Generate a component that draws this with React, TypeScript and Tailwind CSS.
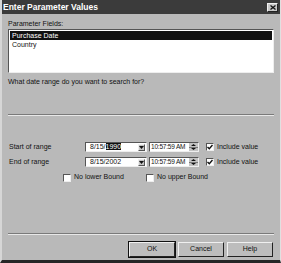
import React from "react";

const font = { fontFamily: '"Liberation Sans", Arial, sans-serif' };

function Check({ checked }: { checked?: boolean }) {
  return (
    <span className="flex h-[8px] w-[8px] shrink-0 items-center justify-center border border-t-[#555] border-l-[#555] border-b-[#eee] border-r-[#eee] bg-white">
      {checked ? (
        <svg width="6" height="6" viewBox="0 0 6 6">
          <path d="M0.5 3 L2.3 4.8 L5.5 1" stroke="#111" strokeWidth="1.4" fill="none" />
        </svg>
      ) : null}
    </span>
  );
}

function RangeRow({ label, date, sel }: { label: string; date: string; sel?: boolean }) {
  return (
    <div className="flex h-[10px] items-center whitespace-nowrap">
      <span className="w-[77px] pl-[1px] text-[7px] text-[#111]">{label}</span>
      <div className="flex h-[10px] w-[62px] items-center border border-t-[#555] border-l-[#555] border-b-[#eee] border-r-[#eee] bg-white">
        <span className="ml-[4px] flex-1 text-[7px] leading-[8px] text-[#111]">
          {sel ? (
            <>
              8/15/<span className="bg-[#111] text-white">1990</span>
            </>
          ) : (
            date
          )}
        </span>
        <span className="mr-[1px] flex h-[7px] w-[7px] items-center justify-center bg-[#c4c4c4] border border-t-[#eee] border-l-[#eee] border-b-[#555] border-r-[#555]">
          <svg width="5" height="3" viewBox="0 0 5 3">
            <path d="M0 0 H5 L2.5 3 Z" fill="#111" />
          </svg>
        </span>
      </div>
      <div className="ml-[2px] flex h-[10px] w-[50px] items-center border border-t-[#555] border-l-[#555] border-b-[#eee] border-r-[#eee] bg-white">
        <span className="ml-[1px] flex-1 overflow-hidden text-[6.5px] leading-[8px] tracking-[-0.2px] text-[#111]">10:57:59 AM</span>
        <span className="flex h-[8px] w-[9px] shrink-0 flex-col bg-[#c4c4c4]">
          <span className="flex flex-1 items-center justify-center border-b border-[#777]">
            <svg width="5" height="2" viewBox="0 0 5 2">
              <path d="M0 2 H5 L2.5 0 Z" fill="#111" />
            </svg>
          </span>
          <span className="flex flex-1 items-center justify-center">
            <svg width="5" height="2" viewBox="0 0 5 2">
              <path d="M0 0 H5 L2.5 2 Z" fill="#111" />
            </svg>
          </span>
        </span>
      </div>
      <span className="ml-[7px]">
        <Check checked />
      </span>
      <span className="ml-[3px] text-[7px] text-[#111]">Include value</span>
    </div>
  );
}

function Btn({ children, def }: { children: React.ReactNode; def?: boolean }) {
  return (
    <button
      className={
        "flex h-[15px] w-[46px] items-center justify-center bg-[#bdbdbd] text-[7px] text-[#111] border border-t-[#f0f0f0] border-l-[#f0f0f0] border-b-[#222] border-r-[#222] " +
        (def ? "outline outline-1 outline-[#111]" : "")
      }
    >
      {children}
    </button>
  );
}

export default function App() {
  return (
    <div
      style={font}
      className="flex h-[263px] w-[281px] flex-col overflow-hidden border-l-2 border-r border-b-[3px] border-l-[#d6d6d6] border-r-[#e0e0e0] border-b-[#262626] bg-[#b9b9b9]"
    >
      <div className="flex h-[14px] items-center justify-between bg-[#3b3b3b] pl-[1px] pr-[2px]">
        <span className="text-[8.5px] font-bold text-white">Enter Parameter Values</span>
        <span className="flex h-[9px] w-[11px] items-center justify-center bg-[#c8c8c8] border border-t-[#f0f0f0] border-l-[#f0f0f0] border-b-[#222] border-r-[#222]">
          <svg width="6" height="5" viewBox="0 0 6 5">
            <path d="M0.5 0.5 L5.5 4.5 M5.5 0.5 L0.5 4.5" stroke="#111" strokeWidth="1.3" />
          </svg>
        </span>
      </div>

      <div className="flex flex-1 flex-col px-[6px]">
        <div className="mt-[6px] text-[7px] leading-[8px] text-[#111]">Parameter Fields:</div>
        <div className="mt-[1px] h-[44px] border border-t-[#555] border-l-[#555] border-b-[#eee] border-r-[#eee] bg-white p-[1px] text-[7px] leading-[9px]">
          <div className="bg-[#111] pl-[2px] text-white">Purchase Date</div>
          <div className="pl-[2px] text-[#111]">Country</div>
        </div>
        <div className="mt-[5px] text-[7px] leading-[8px] text-[#111]">What date range do you want to search for?</div>

        <div className="mt-[28px] border-t border-b border-t-[#7a7a7a] border-b-[#e8e8e8]" />

        <div className="mt-[26px] flex flex-col gap-[5px]">
          <RangeRow label="Start of range" date="8/15/1990" sel />
          <RangeRow label="End of range" date="8/15/2002" />
        </div>

        <div className="mt-[6px] flex h-[9px] items-center whitespace-nowrap pl-[55px]">
          <div className="flex w-[83px] items-center">
            <Check />
            <span className="ml-[3px] text-[7px] text-[#111]">No lower Bound</span>
          </div>
          <div className="flex items-center">
            <Check />
            <span className="ml-[3px] text-[7px] text-[#111]">No upper Bound</span>
          </div>
        </div>

        <div className="mt-[51px] border-t border-b border-t-[#7a7a7a] border-b-[#e8e8e8]" />

        <div className="mt-[7px] flex justify-end gap-[3px] pr-[1px]">
          <Btn def>OK</Btn>
          <Btn>Cancel</Btn>
          <Btn>Help</Btn>
        </div>
      </div>
    </div>
  );
}
